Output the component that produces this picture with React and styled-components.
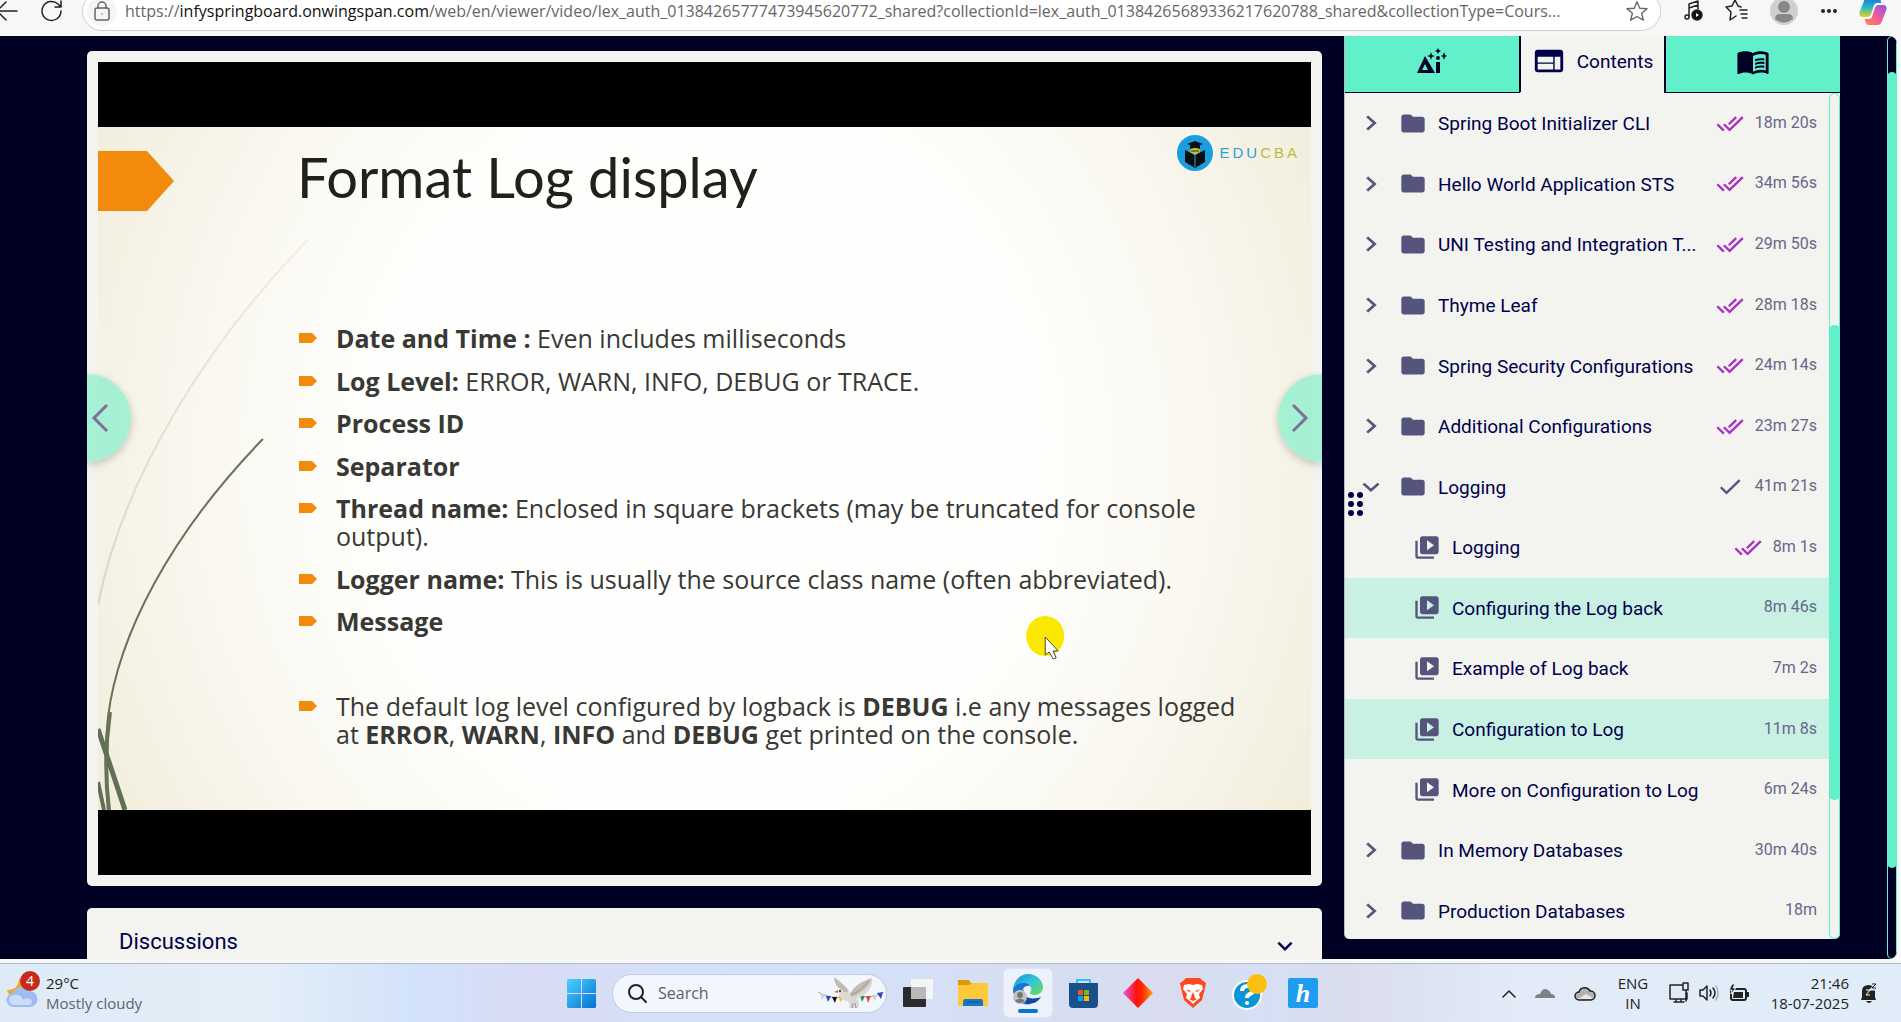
import React from "react";
import styled, { createGlobalStyle } from "styled-components";

const c = {
  navy: "#000025",
  ink: "#00004d",
  slate: "#54547c",
  aqua: "#62f0ca",
  pale: "#c8f1e3",
  card: "#f3f4ef",
  purple: "#ab2fc4",
  orange: "#f28a0c",
};

const GlobalStyle = createGlobalStyle`
  * { box-sizing: border-box; }
  body { margin: 0; background: #f7f7f7; }
  button { border: 0; padding: 0; margin: 0; background: none; font: inherit; color: inherit; cursor: pointer; }
  ul { list-style: none; margin: 0; padding: 0; }
  svg { display: block; flex: none; }
`;

const Screen = styled.div`
  display: flex;
  flex-direction: column;
  height: 100vh;
  overflow: hidden;
  font-family: Roboto, "Liberation Sans", sans-serif;
`;

/* ---------- browser toolbar ---------- */

const Toolbar = styled.header`
  flex: none;
  display: flex;
  align-items: center;
  height: 36px;
  padding-bottom: 14px;
  background: #f7f7f7;
  overflow: hidden;
`;

const NavButtons = styled.div`
  display: flex;
  align-items: center;
  gap: 22px;
  width: 82px;
  flex: none;
`;

const AddressBar = styled.div`
  flex: 1;
  min-width: 0;
  display: flex;
  align-items: center;
  gap: 8px;
  height: 40px;
  flex-shrink: 0;
  padding: 0 12px 0 4px;
  border: 1px solid #cfcfcf;
  border-radius: 20px;
  background: #fff;
`;

const SiteInfo = styled.button`
  display: grid;
  place-items: center;
  width: 30px;
  height: 30px;
  border-radius: 50%;
  background: #f5f5f5;
`;

const Url = styled.div`
  flex: 1;
  min-width: 0;
  overflow: hidden;
  white-space: nowrap;
  font: 16px/28px "Open Sans", "Noto Sans", sans-serif;
  color: #666;
  outline: none;
`;

const Host = styled.span`
  color: #111;
`;

const ToolbarActions = styled.div`
  display: flex;
  align-items: center;
  justify-content: space-between;
  width: 240px;
  flex: none;
  padding: 0 14px 0 22px;
`;

/* ---------- page ---------- */

const PageFrame = styled.div`
  flex: 1;
  min-height: 0;
  display: flex;
  padding: 0 4px 4px 0;
`;

const Page = styled.div`
  flex: 1;
  min-width: 0;
  display: flex;
  padding-left: 87px;
  background: ${c.navy};
  border-radius: 0 8px 8px 0;
  overflow: hidden;
`;

const Main = styled.main`
  flex: 1;
  min-width: 0;
  display: flex;
  flex-direction: column;
  gap: 22px;
  padding-top: 15px;
`;

const PlayerCard = styled.section`
  position: relative;
  flex: 1;
  min-height: 0;
  display: flex;
  padding: 11px;
  background: ${c.card};
  border-radius: 5px;
  overflow: hidden;
`;

const Video = styled.div`
  flex: 1;
  display: flex;
  padding: 65px 0;
  background: #000;
`;

const StepButton = styled.button`
  position: absolute;
  top: 323px;
  ${(p) => (p.$side === "left" ? "left: 0;" : "right: 0;")}
  display: flex;
  align-items: center;
  justify-content: center;
  width: 44px;
  height: 88px;
  padding: ${(p) => (p.$side === "left" ? "0 18px 0 0" : "0")};
  border-radius: ${(p) => (p.$side === "left" ? "0 44px 44px 0" : "44px 0 0 44px")};
  background: rgba(152, 239, 209, 0.86);
  box-shadow: 0 3px 8px rgba(0, 0, 0, 0.2);
`;

const Slide = styled.article`
  position: relative;
  flex: 1;
  display: flex;
  flex-direction: column;
  gap: 105px;
  padding: 8px 11px 62px 0;
  background: radial-gradient(ellipse 62% 120% at 50% 48%, #ffffff 0%, #fefefc 45%, #f9f7ef 68%, #f3f0e0 86%, #ece8d0 100%);
  font-family: "Open Sans", "Noto Sans", sans-serif;
  color: #383835;
`;

const SlideArt = styled.svg`
  position: absolute;
  inset: 0;
  width: 100%;
  height: 100%;
  pointer-events: none;
`;

const SlideHead = styled.header`
  display: flex;
  align-items: flex-start;
`;

const Flag = styled.div`
  width: 199px;
  padding-top: 16px;
`;

const SlideTitle = styled.h1`
  flex: 1;
  margin: 0;
  font-family: Lato, "Open Sans", sans-serif;
  font-size: 56px;
  line-height: 84px;
  font-weight: 400;
  color: #20201c;
`;

const Brand = styled.div`
  display: flex;
  align-items: center;
  gap: 6px;
  font: 15px/36px "Liberation Sans", sans-serif;
  letter-spacing: 3px;
  color: #2d9fd8;
`;

const BrandTail = styled.span`
  color: #b9bd3c;
`;

const Points = styled.ul`
  flex: 1;
  display: flex;
  flex-direction: column;
  justify-content: space-between;
  margin: 0 0 0 201px;
  font-size: 25px;
  line-height: 28px;
`;

const Point = styled.li`
  display: flex;
  gap: 19px;
  min-height: 28px;
  white-space: nowrap;
`;

const BulletBox = styled.span`
  padding-top: 9px;
`;

const DiscussionCard = styled.section`
  flex: 0 0 51px;
  overflow: hidden;
  background: ${c.card};
  border-radius: 5px 5px 0 0;
`;

const DiscussionToggle = styled.button`
  display: flex;
  align-items: center;
  justify-content: space-between;
  width: 100%;
  padding: 0 22px 0 32px;
  font-size: 22px;
  line-height: 68px;
  color: ${c.ink};
`;

const ToggleMark = styled.span`
  padding-top: 8px;
`;

/* ---------- contents panel ---------- */

const Sidebar = styled.aside`
  flex: 0 0 496px;
  display: flex;
  flex-direction: column;
  margin: 0 47px 20px 22px;
  background: ${c.card};
  border-left: 1px solid #b9b9c4;
  border-radius: 0 0 5px 5px;
  overflow: hidden;
`;

const Tabs = styled.div`
  flex: none;
  display: grid;
  grid-template-columns: 174fr 145fr 176fr;
  height: 57px;
`;

const Tab = styled.button`
  display: flex;
  align-items: center;
  justify-content: center;
  gap: 11px;
  padding-bottom: 6px;
  font-size: 19px;
  color: ${c.ink};
  background: ${(p) => (p.$active ? c.card : c.aqua)};
  border-bottom: 1px solid ${(p) => (p.$active ? c.card : c.navy)};
  border-left: ${(p) => (p.$edge ? `2px solid ${c.navy}` : "0")};
`;

const PanelBody = styled.div`
  position: relative;
  flex: 1;
  min-height: 0;
  display: flex;
`;

const Outline = styled.ul`
  flex: 1;
  min-width: 0;
  display: flex;
  flex-direction: column;
  margin-bottom: -2px;
`;

const OutlineItem = styled.li`
  flex: 1;
  display: flex;
  background: ${(p) => (p.$current ? c.pale : "transparent")};
`;

const RowButton = styled.button`
  flex: 1;
  min-width: 0;
  display: flex;
  align-items: center;
  padding: 0 12px 0 ${(p) => (p.$child ? "68px" : "9px")};
  gap: 11px;
  text-align: left;
`;

const RowTitle = styled.span`
  flex: 1;
  min-width: 0;
  padding-top: 2px;
  font-size: 19px;
  line-height: 28px;
  color: ${c.ink};
  white-space: nowrap;
`;

const RowTime = styled.span`
  font-size: 16px;
  line-height: 28px;
  color: #66668a;
  padding-bottom: 1px;
`;

const DragHandle = styled.button`
  position: absolute;
  left: -1px;
  top: 390px;
  display: grid;
  grid-template-columns: 6px 6px;
  gap: 3px;
  align-content: center;
  padding-left: 4px;
  width: 20px;
  height: 42px;
`;

const Dot = styled.i`
  height: 6px;
  border-radius: 50%;
  background: ${c.ink};
`;

const Track = styled.div`
  flex: none;
  display: flex;
  flex-direction: column;
  width: ${(p) => p.$width}px;
  border-radius: 6px;
  box-shadow: inset 0 0 0 1px ${c.aqua};
`;

const Space = styled.span`
  flex: ${(p) => p.$grow};
`;

const Thumb = styled.span`
  flex: ${(p) => p.$grow};
  border-radius: 5px;
  background: ${c.aqua};
`;

/* ---------- taskbar ---------- */

const Taskbar = styled.footer`
  flex: none;
  display: grid;
  grid-template-columns: 1fr auto 1fr;
  align-items: center;
  height: 59px;
  padding-right: 17px;
  border-top: 1px solid #b4b9c6;
  background: linear-gradient(90deg, #deeaf6 0%, #e3eef8 14%, #d2e2fa 22%, #d9dcf4 28%, #d3e2f9 38%, #d6dff5 50%, #d9dcee 62%, #d5e0f6 66%, #dadded 71%, #e2ebf7 80%, #e0edf9 100%);
  font: 15px/20px "Open Sans", "Noto Sans", sans-serif;
  color: #222;
`;

const Weather = styled.button`
  display: flex;
  align-items: center;
  gap: 6px;
  padding-left: 6px;
  text-align: left;
`;

const WeatherArt = styled.svg`
  overflow: visible;
`;

const WeatherText = styled.span`
  display: flex;
  flex-direction: column;
`;

const Muted = styled.span`
  color: #5c6470;
`;

const Apps = styled.div`
  display: flex;
  align-items: center;
  gap: 7px;
`;

const AppButton = styled.button`
  display: grid;
  place-items: center;
  width: 48px;
  height: 48px;
  border-radius: 5px;
  ${(p) => p.$open && "background: #edf1fb; box-shadow: 0 0 0 1px #e0e4f0; border-bottom: 4px solid transparent; background-clip: border-box;"}
`;

const SearchBox = styled.label`
  display: flex;
  align-items: center;
  gap: 11px;
  width: 275px;
  height: 39px;
  padding: 0 2px 0 14px;
  border: 1px solid #c3cbe0;
  border-radius: 20px;
  background: #f2f6fd;
`;

const SearchInput = styled.input`
  flex: 1;
  min-width: 0;
  padding: 0;
  border: 0;
  outline: 0;
  background: none;
  font: 16px/24px "Open Sans", "Noto Sans", sans-serif;
  &::placeholder { color: #5b5f66; opacity: 1; }
`;

const Tray = styled.div`
  display: flex;
  align-items: center;
  justify-content: flex-end;
  gap: 11px;
  padding-right: 6px;
`;

const TrayGroup = styled.div`
  display: flex;
  align-items: center;
  gap: ${(p) => p.$gap}px;
  padding-right: ${(p) => p.$end || 0}px;
`;

const TrayText = styled.button`
  display: flex;
  flex-direction: column;
  min-width: ${(p) => p.$width}px;
  text-align: ${(p) => p.$align};
`;

/* ---------- drawings ---------- */

const paths = {
  folder: "M10 4H4c-1.1 0-1.99.9-1.99 2L2 18c0 1.1.9 2 2 2h16c1.1 0 2-.9 2-2V8c0-1.1-.9-2-2-2h-8l-2-2z",
  video: "M4 6H2v14c0 1.1.9 2 2 2h14v-2H4V6zm16-4H8c-1.1 0-2 .9-2 2v12c0 1.1.9 2 2 2h12c1.1 0 2-.9 2-2V4c0-1.1-.9-2-2-2zm-8 12.5v-9l6 4.5-6 4.5z",
  all: "M18 7l-1.41-1.41-6.34 6.34 1.41 1.41L18 7zm4.24-1.41L11.66 16.17 7.48 12l-1.41 1.41L11.66 19l12-12-1.42-1.41zM.41 13.41L6 19l1.41-1.41L1.83 12 .41 13.41z",
  check: "M9 16.17L4.83 12l-1.42 1.41L9 19 21 7l-1.41-1.41z",
  right: "M10 6L8.59 7.41 13.17 12l-4.58 4.59L10 18l6-6z",
  down: "M16.59 8.59L12 13.17 7.41 8.59 6 10l6 6 6-6z",
  web: "M20 4H4c-1.1 0-1.99.9-1.99 2L2 18c0 1.1.9 2 2 2h16c1.1 0 2-.9 2-2V6c0-1.1-.9-2-2-2zm-5 14H4v-4h11v4zm0-5H4V9h11v4zm5 5h-4V9h4v9z",
  book: "M21 5c-1.11-.35-2.33-.5-3.5-.5-1.95 0-4.05.4-5.5 1.5-1.45-1.1-3.55-1.5-5.5-1.5S2.45 4.9 1 6v14.65c0 .25.25.5.5.5.1 0 .15-.05.25-.05C3.1 20.45 5.05 20 6.5 20c1.95 0 4.05.4 5.5 1.5 1.35-.85 3.8-1.5 5.5-1.5 1.65 0 3.35.3 4.75 1.05.1.05.15.05.25.05.25 0 .5-.25.5-.5V6c-.6-.45-1.25-.75-2-1zm0 13.5c-1.1-.35-2.3-.5-3.5-.5-1.7 0-4.15.65-5.5 1.5V8c1.35-.85 3.8-1.5 5.5-1.5 1.2 0 2.4.15 3.5.5v11.5z M13.5 10.4c2-.9 4.300-1 6.500-.6v1.500c-2.200-.4-4.500-.3-6.500.6z M13.500 13c2-.9 4.300-1 6.500-.6v1.500c-2.200-.4-4.500-.3-6.500.6z M13.500 15.700c2-.9 4.300-1 6.500-.6v1.500c-2.200-.4-4.500-.3-6.500.6z",
};

function Glyph({ name, color = c.slate, w = 28, h = 27 }) {
  return (
    <svg width={w} height={h} viewBox="0 0 24 24" preserveAspectRatio="none" fill={color} aria-hidden="true">
      <path d={paths[name]} />
    </svg>
  );
}

const Stroke = ({ w = 24, h = 24, box = "0 0 24 24", width = 1.5, color = "#222", children }) => (
  <svg width={w} height={h} viewBox={box} fill="none" stroke={color} strokeWidth={width} strokeLinecap="round" strokeLinejoin="round" aria-hidden="true">
    {children}
  </svg>
);

const StepArrow = ({ d }) => (
  <svg width="18" height="30" viewBox="0 0 18 30" fill="none" stroke="#7c7195" strokeWidth="3" aria-hidden="true">
    <path d={d} />
  </svg>
);

const AiIcon = () => (
  <svg width="30" height="26" viewBox="0 0 30 26" fill={c.navy} aria-hidden="true">
    <path fillRule="evenodd" d="M8 8l10 17H0zM8 16l-3 6h6z" />
    <path d="M19 14h4v11h-4zM21 0l1 2 2 1-2 1-1 2-1-2-2-1 2-1zM14 4l1 3 3 1-3 1-1 3-1-3-3-1 3-1zM27 4l1 3 2 1-2 1-1 3-1-3-2-1 2-1zM21 8a2 2 0 1 1 0 4a2 2 0 1 1 0-4z" />
  </svg>
);

const Copilot = () => (
  <svg width="28" height="28" viewBox="0 0 28 28" aria-hidden="true">
    <defs>
      <linearGradient id="cpA" x1="0" y1="0" x2="0" y2="1"><stop offset="0" stopColor="#1a6fe0" /><stop offset=".5" stopColor="#22b8c8" /><stop offset="1" stopColor="#e8d02c" /></linearGradient>
      <linearGradient id="cpB" x1="1" y1="0" x2="0" y2="1"><stop offset="0" stopColor="#8a55e8" /><stop offset=".5" stopColor="#ee5b9c" /><stop offset="1" stopColor="#fb8a4c" /></linearGradient>
    </defs>
    <path fill="url(#cpA)" d="M10 0h8c2 0 3 1 3.500 3l.8 3h-4c-2 0-3 1-3.600 3l-2.500 8c-.7 2-2 3-4 3H4c-3 0-4-2-3.300-5L5 4c.8-2.600 2-4 5-4z" />
    <path fill="url(#cpB)" d="M18 28h-8c-2 0-3-1-3.500-3l-.8-3h4c2 0 3-1 3.600-3l2.500-8c.7-2 2-3 4-3H24c3 0 4 2 3.300 5L23 24c-.8 2.600-2 4-5 4z" />
  </svg>
);

const SlideDrawing = () => (
  <SlideArt viewBox="0 0 1214 683" preserveAspectRatio="none" aria-hidden="true">
    <defs>
      <linearGradient id="fade" x1="0" y1="1" x2="1" y2="0"><stop offset="0" stopColor="#d9d7c6" /><stop offset="1" stopColor="#f0eee4" /></linearGradient>
    </defs>
    <path d="M210 113C110 215 25 350 0 478" fill="none" stroke="url(#fade)" strokeWidth="2" />
    <path d="M165 312C70 410 20 510 10 590C7 620 7 650 10 683" fill="none" stroke="#6d7058" strokeWidth="2" />
    <path d="M12 585C7 620 7 650 11 683" fill="none" stroke="#65745a" strokeWidth="4" />
    <path d="M0 602L27 683" stroke="#626f55" strokeWidth="5" />
    <path d="M0 655L6 683" stroke="#626f55" strokeWidth="4" />
    <ellipse cx="948" cy="509" rx="19" ry="20" fill="#fae800" />
    <path d="M948 510v18l4-3 4 7 3-1-3-7h5z" fill="#fff" stroke="#444" strokeWidth="1" />
  </SlideArt>
);

const EducbaMark = () => (
  <svg width="36" height="36" viewBox="0 0 36 36" aria-hidden="true">
    <circle cx="18" cy="18" r="18" fill="#1b9ee0" />
    <path d="M8 15l10 5 10-5v12l-10 6-10-6z" fill="#0b0f12" />
    <path d="M13 12h10v5l-5 3-5-3z" fill="#b8c43a" />
    <path d="M18 6l8 3-8 3-8-3zM13 10h10v4q-5-2-10 0z" fill="#0b0f12" />
    <path d="M14 16h8" stroke="#333" />
    <path d="M18 20v12" stroke="#1b9ee0" />
  </svg>
);

const Bullet = () => (
  <BulletBox>
    <svg width="18" height="10" viewBox="0 0 18 10" aria-hidden="true">
      <path d="M0 0h13l5 5-5 5H0z" fill={c.orange} />
    </svg>
  </BulletBox>
);

const WeatherIcon = () => (
  <WeatherArt width="34" height="38" viewBox="0 4 34 38" aria-hidden="true">
    <path d="M13 8c0 8-4 12-12 12 1 4 4 7 9 7 6 0 10-5 10-11z" fill="#f5a623" />
    <path d="M8 37a7 7 0 0 1-1-14 9 9 0 0 1 16-2 8 8 0 0 1 1 16z" fill="#9dbdf2" />
    <path d="M8 35a5 5 0 0 1 0-10c6-1 8 2 9 5 3-3 8-2 9 1 0 3-2 4-4 4z" fill="#cbdcfa" />
    <circle cx="24" cy="11" r="10" fill="#c42b1c" />
    <text x="24" y="16" textAnchor="middle" fontSize="14" fill="#fff" fontFamily="Open Sans">4</text>
  </WeatherArt>
);

const StartIcon = () => (
  <svg width="29" height="29" viewBox="0 0 29 29" aria-hidden="true">
    <defs><linearGradient id="win" x1="0" y1="0" x2="1" y2="1"><stop offset="0" stopColor="#4fd2ff" /><stop offset="1" stopColor="#0070d0" /></linearGradient></defs>
    <path fill="url(#win)" d="M1 0h13v14H0V1zM15 0h13l1 1v13H15zM0 15h14v14H1l-1-1zM15 15h14v13l-1 1H15z" />
  </svg>
);

const Dove = () => (
  <svg width="66" height="32" viewBox="0 0 66 32" aria-hidden="true">
    <path d="M0 15q14 8 26 4M42 19q12 3 24-4" stroke="#aaa" fill="none" />
    <path d="M2 16l5 2-3 5z" fill="#d5d0cc" /><path d="M8 19h5l-3 6z" fill="#2b45c8" /><path d="M14 20h5l-2 6z" fill="#111" /><path d="M20 20h5l-2 5z" fill="#f8b820" />
    <path d="M42 19h5l-3 6z" fill="#169a50" /><path d="M48 19h5l-3 7z" fill="#f04438" /><path d="M54 18h5l-2 6z" fill="#d5d0cc" /><path d="M59 16l6-1-2 7z" fill="#2b45c8" />
    <path d="M17 15c3-4 8-2 12 1C36 15 45 9 54 2c1 8-5 17-15 19 1 3 3 6 1 10h-9c1-3 1-5-2-7-7-1-8-6-8-9z" fill="#ded8d3" />
    <path d="M29 16C20 12 16 7 16 0c5 4 11 8 15 14zM32 17C36 9 44 4 54 1c-3 9-12 16-20 19z" fill="#c4bbb5" />
    <path d="M20 13l-4 2 4 1z" fill="#f06a3c" />
    <path d="M33 18c7-3 13-8 18-14M34 31l1-5m3 5l-1-5" stroke="#a0978f" fill="none" />
    <circle cx="22" cy="14" r="1" fill="#222" />
  </svg>
);

const TaskView = () => (
  <svg width="30" height="28" viewBox="0 0 30 28" aria-hidden="true">
    <rect x="0" y="8" width="23" height="20" rx="1" fill="#2b2b2b" />
    <rect x="8" y="0" width="22" height="20" rx="1" fill="#f5f5f5" opacity=".95" />
    <rect x="8" y="8" width="15" height="12" fill="#b9b9b9" />
  </svg>
);

const FolderApp = () => (
  <svg width="30" height="28" viewBox="0 0 30 28" aria-hidden="true">
    <path d="M0 1h11l2 3h17v8H0z" fill="#d99a08" />
    <path d="M0 6h11l3-2h16v23H0z" fill="#fdc83a" />
    <path d="M5 27v-5q0-2 2-2h16q2 0 2 2v5z" fill="#1676c8" />
    <path d="M9 23h12" stroke="#0b4f8f" />
  </svg>
);

const EdgeApp = () => (
  <svg width="30" height="44" viewBox="0 0 30 44" aria-hidden="true">
    <defs>
      <linearGradient id="edgeTop" x1="0" y1="0" x2="1" y2="1"><stop offset="0" stopColor="#1d8fe0" /><stop offset=".5" stopColor="#35c5d8" /><stop offset="1" stopColor="#6be04a" /></linearGradient>
    </defs>
    <path d="M0 20C1 11 8 5 15 5c9 0 15 7 15 13 0 5-4 8-8 8-3 0-5-1-5-2s2-2 1-5-4-4-7-4c-5 0-9 2-11 5z" fill="url(#edgeTop)" />
    <path d="M0 20c2-4 6-6 11-6 3 0 5 1 6 3-5-1-8 3-8 7 0 5 4 9 9 11C8 37 0 31 0 20z" fill="#1673cf" />
    <path d="M11 20c-2 7 5 12 17 8-3 5-8 7-13 7C8 33 7 26 11 20z" fill="#114b98" />
    <circle cx="7" cy="28" r="7" fill="#c5c3c0" /><circle cx="7" cy="26" r="3" fill="#777" /><path d="M2 32q5-5 10 0-5 4-10 0z" fill="#777" />
    <rect x="5" y="40" width="20" height="4" rx="2" fill="#0078d4" />
  </svg>
);

const StoreApp = () => (
  <svg width="29" height="29" viewBox="0 0 29 29" aria-hidden="true">
    <path d="M8 6V1h13v5" fill="none" stroke="#38bdf2" strokeWidth="2" />
    <path d="M0 4h29v21q0 4-4 4H4q-4 0-4-4z" fill="#17508a" />
    <path d="M9 11h5v5H9z" fill="#f25022" /><path d="M15 11h5v5h-5z" fill="#7fba00" /><path d="M9 17h5v5H9z" fill="#00a4ef" /><path d="M15 17h5v5h-5z" fill="#ffb900" />
  </svg>
);

const DiamondApp = () => (
  <svg width="30" height="30" viewBox="0 0 30 30" aria-hidden="true">
    <defs><linearGradient id="dia"><stop offset="0" stopColor="#e35ae0" /><stop offset=".45" stopColor="#ff1010" /><stop offset=".65" stopColor="#ff2a00" /><stop offset="1" stopColor="#f7a814" /></linearGradient></defs>
    <path d="M15 0l15 15-15 15L0 15z" fill="url(#dia)" />
  </svg>
);

const BraveApp = () => (
  <svg width="26" height="30" viewBox="0 0 26 30" aria-hidden="true">
    <path d="M6 0h14l3 3 3 2-1 5-3 12-9 8-9-8L1 10 0 5l3-2z" fill="#fb4a1e" />
    <path d="M4 7l5-1 4 1 4-1 5 1 1 4-4 5 1 4-4 3-3 3-3-3-4-3 1-4-4-5z" fill="#fff" />
    <path d="M6 11l5 2-2 1zM20 11l-5 2 2 1zM13 14l2 5-2 2-2-2zM9 21l4-2 4 2-4 2z" fill="#fb4a1e" />
  </svg>
);

const HelpApp = () => (
  <svg width="38" height="38" viewBox="-2 0 38 38" aria-hidden="true">
    <circle cx="16" cy="21" r="14" fill="#0a95d6" stroke="#fff" strokeWidth="2" />
    <path d="M11 17q0-5 6-5 5 0 5 4 0 3-3 4t-3 4" fill="none" stroke="#fff" strokeWidth="4" />
    <circle cx="16" cy="29" r="2" fill="#fff" />
    <circle cx="26" cy="10" r="10" fill="#fdbf0f" />
  </svg>
);

const HApp = () => (
  <svg width="30" height="30" viewBox="0 0 30 30" aria-hidden="true">
    <rect width="30" height="30" rx="2" fill="#1f9cf0" />
    <text x="15" y="24" textAnchor="middle" fontSize="26" fontWeight="700" fontStyle="italic" fill="#fff" fontFamily="Liberation Serif">h</text>
  </svg>
);

const Cloud = ({ outlined }) => (
  <svg width="22" height="16" viewBox="0 0 22 16" aria-hidden="true">
    {outlined ? (
      <>
        <path d="M5 15a4 4 0 0 1 0-8 6 6 0 0 1 11-1 4 4 0 0 1 1 9z" fill="#b2b2b2" stroke="#222" strokeWidth="1.500" />
        <path d="M4 14l8-5 7 4-2 1z" fill="#e8e8e8" />
      </>
    ) : (
      <path d="M1 13q0-4 5-4 3-7 8-4 3 2 3 4 4 0 4 4z" fill="#7c8087" />
    )}
  </svg>
);

const Battery = () => (
  <svg width="22" height="18" viewBox="0 0 22 18" aria-hidden="true">
    <rect x="3" y="5" width="15" height="11" rx="2" fill="none" stroke="#222" strokeWidth="2" />
    <path d="M6 8h9v6H5zM19 8h2v5h-2z" fill="#222" />
    <path d="M4 0L1 6h3l-1 4 5-6H5l2-4z" fill="#222" stroke="#e0edf9" />
  </svg>
);

const Bell = () => (
  <svg width="18" height="22" viewBox="0 0 18 22" aria-hidden="true">
    <path d="M2 15V9q0-6 7-6 6 0 6 6v6l1 3H1zM6 19h6q-3 4-6 0z" fill="#222" />
    <path d="M11 2h6l-5 5h5" fill="none" stroke="#e0edf9" strokeWidth="3" />
    <path d="M6 8h4l-4 5h4" fill="none" stroke="#fff" /><path d="M12 2h4l-4 4h4" fill="none" stroke="#222" strokeWidth="1" />
  </svg>
);

/* ---------- data ---------- */

const outline = [
  { title: "Spring Boot Initializer CLI", time: "18m 20s", mark: "all" },
  { title: "Hello World Application STS", time: "34m 56s", mark: "all" },
  { title: "UNI Testing and Integration T...", time: "29m 50s", mark: "all" },
  { title: "Thyme Leaf", time: "28m 18s", mark: "all" },
  { title: "Spring Security Configurations", time: "24m 14s", mark: "all" },
  { title: "Additional Configurations", time: "23m 27s", mark: "all" },
  { title: "Logging", time: "41m 21s", mark: "check", open: true },
  { title: "Logging", time: "8m 1s", mark: "all", child: true },
  { title: "Configuring the Log back", time: "8m 46s", child: true, current: true },
  { title: "Example of Log back", time: "7m 2s", child: true },
  { title: "Configuration to Log", time: "11m 8s", child: true, current: true },
  { title: "More on Configuration to Log", time: "6m 24s", child: true },
  { title: "In Memory Databases", time: "30m 40s" },
  { title: "Production Databases", time: "18m" },
];

const points = [
  <><b>Date and Time :</b> Even includes milliseconds</>,
  <><b>Log Level:</b> ERROR, WARN, INFO, DEBUG or TRACE.</>,
  <b>Process ID</b>,
  <b>Separator</b>,
  <><b>Thread name:</b> Enclosed in square brackets (may be truncated for console<br />output).</>,
  <><b>Logger name:</b> This is usually the source class name (often abbreviated).</>,
  <b>Message</b>,
  null,
  <>The default log level configured by logback is <b>DEBUG</b> i.e any messages logged<br />at <b>ERROR</b>, <b>WARN</b>, <b>INFO</b> and <b>DEBUG</b> get printed on the console.</>,
];

const apps = [
  { name: "Task view", Icon: TaskView },
  { name: "File Explorer", Icon: FolderApp },
  { name: "Edge", Icon: EdgeApp, open: true },
  { name: "Store", Icon: StoreApp },
  { name: "Diamond", Icon: DiamondApp },
  { name: "Brave", Icon: BraveApp },
  { name: "Help", Icon: HelpApp },
  { name: "Notes", Icon: HApp },
];

function BrowserToolbar() {
  return (
    <Toolbar>
      <NavButtons>
        <button aria-label="Back"><Stroke w={18} box="3 0 18 24"><path d="M20 12H1M9 3L0 12l9 9" /></Stroke></button>
        <button aria-label="Reload"><Stroke><path d="M21 12a9.500 9.500 0 1 1-3-7l3 3M21 2v6h-6" /></Stroke></button>
      </NavButtons>
      <AddressBar>
        <SiteInfo aria-label="Site information">
          <Stroke w={18} h={20} box="0 0 18 20" color="#666"><rect x="2" y="7" width="14" height="12" rx="2" /><path d="M5 7V5a4 4 0 0 1 8 0v2M9 13v.1" /></Stroke>
        </SiteInfo>
        <Url role="textbox" aria-label="Address" tabIndex={0}>
          https://<Host>infyspringboard.onwingspan.com</Host>/web/en/viewer/video/lex_auth_01384265777473945620772_shared?collectionId=lex_auth_01384265689336217620788_shared&amp;collectionType=Cours...
        </Url>
        <button aria-label="Add to favourites">
          <Stroke w={22} h={22} color="#666"><path d="M12 2l3 7 8 .5-6 5 2 7.500-7-4-7 4 2-7.500-6-5 8-.5z" /></Stroke>
        </button>
      </AddressBar>
      <ToolbarActions>
        <button aria-label="Media">
          <Stroke w={20} h={22} box="0 0 20 22"><path d="M6 16V4l9-3v8M6 8l9-3" /><circle cx="4" cy="17" r="2" /><circle cx="14" cy="15" r="5" fill="#111" /><path d="M13 13l3 2-3 2z" fill="#fff" stroke="none" /></Stroke>
        </button>
        <button aria-label="Favourites">
          <Stroke><path d="M16 8l-3-1-3-6-3 6-6 1 5 5-1 8 6-4M15 11h7M16 15h6M17 19h5" /></Stroke>
        </button>
        <button aria-label="Profile">
          <svg width="28" height="28" viewBox="0 0 28 28"><circle cx="14" cy="14" r="14" fill="#d2d0ce" /><circle cx="14" cy="10" r="6" fill="#8a8886" /><path d="M5 22q0-5 5-5h8q5 0 5 5-9 7-18 0z" fill="#8a8886" /></svg>
        </button>
        <button aria-label="More">
          <svg width="18" height="6" viewBox="0 0 18 6" fill="#222"><circle cx="3" cy="3" r="2" /><circle cx="9" cy="3" r="2" /><circle cx="15" cy="3" r="2" /></svg>
        </button>
        <button aria-label="Copilot"><Copilot /></button>
      </ToolbarActions>
    </Toolbar>
  );
}

function Player() {
  return (
    <PlayerCard>
      <Video>
        <Slide>
          <SlideDrawing />
          <SlideHead>
            <Flag>
              <svg width="76" height="60" viewBox="0 0 76 60" aria-hidden="true"><path d="M0 0h49l27 30-27 30H0z" fill={c.orange} /></svg>
            </Flag>
            <SlideTitle>Format Log display</SlideTitle>
            <Brand><EducbaMark /><span>EDU<BrandTail>CBA</BrandTail></span></Brand>
          </SlideHead>
          <Points>
            {points.map((text, i) => (
              <Point key={i} aria-hidden={text ? undefined : true}>{text && <Bullet />}<span>{text}</span></Point>
            ))}
          </Points>
        </Slide>
      </Video>
      <StepButton $side="left" aria-label="Previous"><StepArrow d="M16 2L3 15l13 13" /></StepButton>
      <StepButton $side="right" aria-label="Next"><StepArrow d="M2 2l13 13L2 28" /></StepButton>
    </PlayerCard>
  );
}

function OutlineRow({ item }) {
  return (
    <OutlineItem $current={item.current}>
      <RowButton $child={item.child}>
        {!item.child && <Glyph name={item.open ? "down" : "right"} w={34} h={30} />}
        <Glyph name={item.child ? "video" : "folder"} />
        <RowTitle>{item.title}</RowTitle>
        {item.mark && <Glyph name={item.mark} color={item.mark === "all" ? c.purple : c.slate} />}
        <RowTime>{item.time}</RowTime>
      </RowButton>
    </OutlineItem>
  );
}

function ContentsPanel() {
  return (
    <Sidebar>
      <Tabs role="tablist">
        <Tab role="tab" aria-label="AI"><AiIcon /></Tab>
        <Tab role="tab" aria-selected $active $edge><Glyph name="web" color={c.ink} w={34} h={34} />Contents</Tab>
        <Tab role="tab" aria-label="Notes" $edge><Glyph name="book" color={c.navy} w={34} h={33} /></Tab>
      </Tabs>
      <PanelBody>
        <Outline>
          {outline.map((item, i) => <OutlineRow key={i} item={item} />)}
        </Outline>
        <Track $width={11}><Space $grow={232} /><Thumb $grow={475} /><Space $grow={139} /></Track>
        <DragHandle aria-label="Resize"><Dot /><Dot /><Dot /><Dot /><Dot /><Dot /></DragHandle>
      </PanelBody>
    </Sidebar>
  );
}

function SystemTaskbar() {
  return (
    <Taskbar>
      <Weather>
        <WeatherIcon />
        <WeatherText><span>29°C</span><Muted>Mostly cloudy</Muted></WeatherText>
      </Weather>
      <Apps>
        <AppButton aria-label="Start"><StartIcon /></AppButton>
        <SearchBox>
          <Stroke w={20} h={20} box="0 0 20 20" width={2}><circle cx="9" cy="9" r="7" /><path d="M14 14l5 5" /></Stroke>
          <SearchInput type="text" placeholder="Search" aria-label="Search" />
          <Dove />
        </SearchBox>
        {apps.map(({ name, Icon, open }) => <AppButton key={name} aria-label={name} $open={open}><Icon /></AppButton>)}
      </Apps>
      <Tray>
        <TrayGroup $gap={18} $end={5}>
          <Stroke w={14} h={9} box="0 0 14 9"><path d="M1 8l6-6 6 6" /></Stroke>
          <Cloud />
          <Cloud outlined />
          <TrayText $align="center" $width={38}><span>ENG</span><span>IN</span></TrayText>
        </TrayGroup>
        <TrayGroup $gap={9}>
          <Stroke w={22} h={22} box="0 0 22 22"><path d="M14 3H2v14h17v-6M6 20h10M8 17v3M13 17v3M15 1h5v7h-5zM18 8v11" /></Stroke>
          <Stroke w={20} h={18} box="0 0 20 18"><path d="M1 6h3l4-4v14l-4-4H1zM11 6q2 3 0 6M14 4q4 5 0 10" /><path d="M17 2q4 7 0 14" stroke="#aaa" /></Stroke>
          <Battery />
        </TrayGroup>
        <TrayText $align="right" $width={88}><span>21:46</span><span>18-07-2025</span></TrayText>
        <Bell />
      </Tray>
    </Taskbar>
  );
}

export default function App() {
  return (
    <Screen>
      <GlobalStyle />
      <BrowserToolbar />
      <PageFrame>
        <Page>
          <Main>
            <Player />
            <DiscussionCard>
              <DiscussionToggle>Discussions<ToggleMark><Glyph name="down" color={c.ink} w={30} h={30} /></ToggleMark></DiscussionToggle>
            </DiscussionCard>
          </Main>
          <ContentsPanel />
          <Track $width={10}><Space $grow={36} /><Thumb $grow={796} /><Space $grow={91} /></Track>
        </Page>
      </PageFrame>
      <SystemTaskbar />
    </Screen>
  );
}
